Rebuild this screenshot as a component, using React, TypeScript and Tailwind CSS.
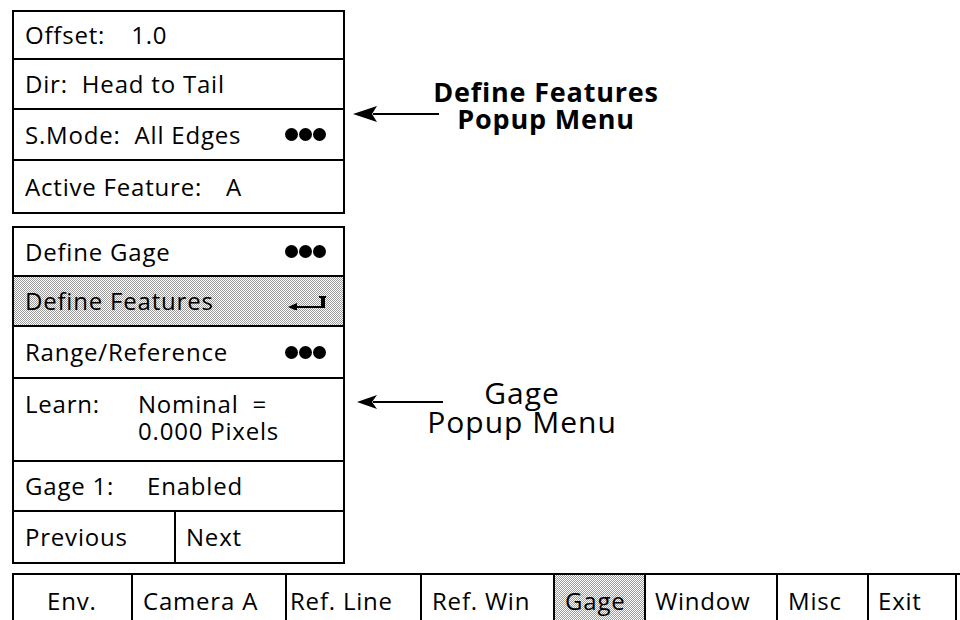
import React from 'react';

const dither =
  'bg-[conic-gradient(#9c9c9c_25%,#ffffff_25%_50%,#9c9c9c_50%_75%,#ffffff_75%)] bg-[length:2px_2px]';

const Dots = () => (
  <div className="ml-auto flex gap-[1px]">
    <span className="h-[13px] w-[13px] rounded-full bg-black" />
    <span className="h-[13px] w-[13px] rounded-full bg-black" />
    <span className="h-[13px] w-[13px] rounded-full bg-black" />
  </div>
);

const ReturnMark = () => (
  <svg className="mt-[4px] ml-auto" width="38" height="14" viewBox="0 0 38 14">
    <line x1="6" y1="11" x2="36" y2="11" stroke="black" strokeWidth="2" />
    <polygon points="0,11 9,7 9,15" fill="black" />
    <rect x="33" y="1" width="4" height="11" fill="black" />
    <rect x="31" y="0" width="7" height="2" fill="black" />
  </svg>
);

const Arrow = ({ head = 24, tall = 8 }: { head?: number; tall?: number }) => (
  <svg width="86" height="18" viewBox="0 0 86 18">
    <line x1={head - 4} y1="9" x2="86" y2="9" stroke="black" strokeWidth="2" />
    <polygon points={`0,9 ${head},${9 - tall} ${head - 5},9 ${head},${9 + tall}`} fill="black" />
  </svg>
);

const Row: React.FC<{ h: string; shaded?: boolean; children: React.ReactNode }> = ({
  h,
  shaded,
  children,
}) => (
  <div className={`flex items-center pl-[11px] pr-[17px] ${h} ${shaded ? dither : ''}`}>
    {children}
  </div>
);

const tabs = [
  { label: 'Env.', w: 'w-[119px]', pad: 'pl-[33px]' },
  { label: 'Camera A', w: 'w-[154px]', pad: 'pl-[10px]' },
  { label: 'Ref. Line', w: 'w-[135px]', pad: 'pl-[3px]' },
  { label: 'Ref. Win', w: 'w-[133px]', pad: 'pl-[10px]' },
  { label: 'Gage', w: 'w-[91px]', pad: 'pl-[10px]', active: true },
  { label: 'Window', w: 'w-[132px]', pad: 'pl-[9px]' },
  { label: 'Misc', w: 'w-[91px]', pad: 'pl-[10px]' },
  { label: 'Exit', w: 'w-[90px]', pad: 'pl-[9px]', last: true },
];

export default function App() {
  return (
    <div
      className="h-[620px] w-[960px] overflow-hidden bg-white pt-[10px] pl-[12px] text-black"
      style={{ fontFamily: '"Open Sans", "Noto Sans", sans-serif' }}
    >
      {/* Define Features popup */}
      <div className="flex items-start">
        <div className="w-[333px] divide-y-2 divide-black border-2 border-black text-[24px] tracking-[0.8px]">
          <Row h="h-[48px]">
            Offset:<span className="ml-[26px]">1.0</span>
          </Row>
          <Row h="h-[50px]">Dir:&nbsp; Head to Tail</Row>
          <Row h="h-[51px]">
            S.Mode:&nbsp; All Edges
            <Dots />
          </Row>
          <Row h="h-[51px]">
            Active Feature:<span className="ml-[24px]">A</span>
          </Row>
        </div>
        <div className="ml-[8px] mt-[68px] flex items-start">
          <div className="mt-[27px]">
            <Arrow />
          </div>
          <div className="ml-[-18px] w-[250px] text-center text-[27px] font-bold leading-[27px] tracking-[0.8px]">
            <div>Define Features</div>
            <div>Popup Menu</div>
          </div>
        </div>
      </div>

      {/* Gage popup */}
      <div className="mt-[12px] flex items-start">
        <div className="w-[333px] divide-y-2 divide-black border-2 border-black text-[24px] tracking-[0.8px]">
          <Row h="h-[49px]">
            Define Gage
            <Dots />
          </Row>
          <Row h="h-[50px]" shaded>
            Define Features
            <ReturnMark />
          </Row>
          <Row h="h-[52px]">
            Range/Reference
            <Dots />
          </Row>
          <div className="flex h-[83px] items-center pb-[5px] pl-[11px]">
            <div className="flex leading-[27px]">
              <div className="w-[113px]">Learn:</div>
              <div>
                <div>Nominal&nbsp; =</div>
                <div>0.000 Pixels</div>
              </div>
            </div>
          </div>
          <div className="flex h-[50px] items-center pl-[11px]">
            <span className="w-[122px]">Gage 1:</span>
            <span>Enabled</span>
          </div>
          <div className="flex h-[50px] divide-x-2 divide-black">
            <div className="flex w-[162px] items-center pl-[11px]">Previous</div>
            <div className="flex flex-1 items-center pl-[10px]">Next</div>
          </div>
        </div>
        <div className="ml-[12px] mt-[152px] flex items-start">
          <div className="mt-[15px]">
            <Arrow head={20} tall={7} />
          </div>
          <div className="ml-[-21px] w-[200px] text-center text-[30px] leading-[29px] tracking-[1px]">
            <div>Gage</div>
            <div>Popup Menu</div>
          </div>
        </div>
      </div>

      {/* Main menu bar */}
      <div className="mt-[9px] flex h-[54px] border-t-2 border-black text-[24px] tracking-[0.8px]">
        {tabs.map((t) => (
          <div
            key={t.label}
            className={`flex items-center border-l-2 border-black ${t.w} ${t.pad} ${
              t.last ? 'border-r-2' : ''
            } ${t.active ? dither : ''}`}
          >
            {t.label}
          </div>
        ))}
      </div>
    </div>
  );
}
